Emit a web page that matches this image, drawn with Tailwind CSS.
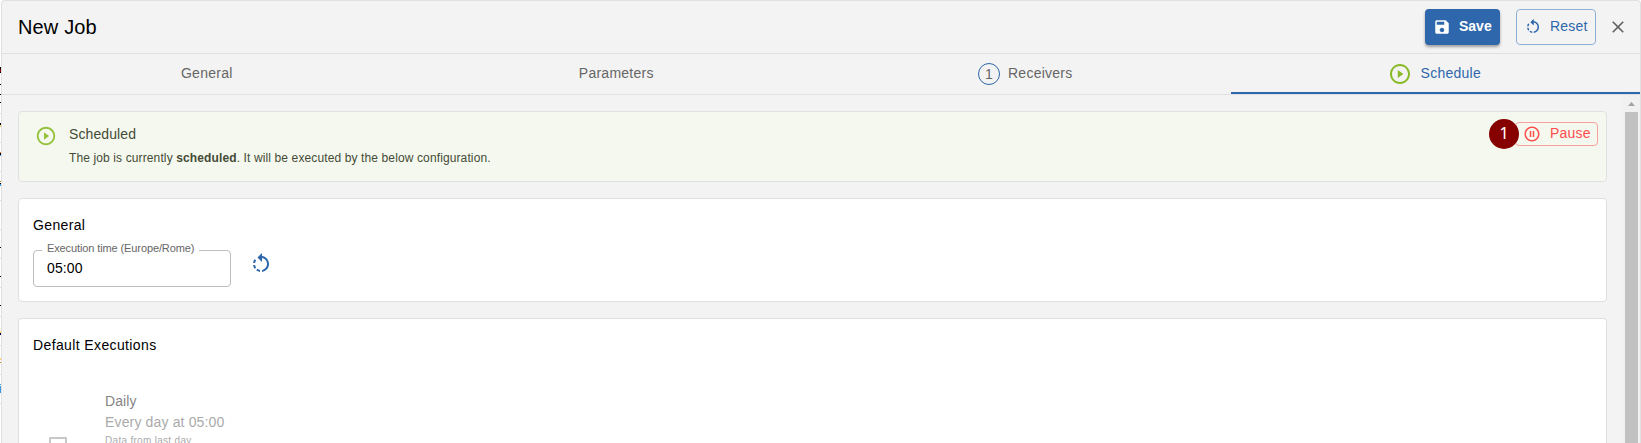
<!DOCTYPE html>
<html lang="en">
<head>
<meta charset="utf-8">
<title>New Job</title>
<script src="https://cdn.jsdelivr.net/npm/@tailwindcss/browser@4"></script>
</head>
<body class="h-[443px] w-[1641px] overflow-hidden bg-white font-['Liberation_Sans',Arial,sans-serif] text-black">
<svg width="0" height="0" class="absolute">
  <symbol id="rotate" viewBox="0 0 24 24"><path d="M7.11 8.53 5.7 7.11C4.8 8.27 4.24 9.61 4.07 11h2.02c.14-.87.49-1.72 1.02-2.47zM6.09 13H4.07c.17 1.39.72 2.73 1.62 3.89l1.41-1.42c-.52-.75-.87-1.59-1.01-2.47zm1.01 5.32c1.16.9 2.51 1.44 3.9 1.61V17.9c-.87-.15-1.71-.49-2.46-1.03L7.1 18.32zM13 4.07V1L8.45 5.55 13 10V6.09c2.84.48 5 2.94 5 5.91s-2.16 5.43-5 5.91v2.02c3.95-.49 7-3.85 7-7.93s-3.05-7.44-7-7.93z"/></symbol>
  <symbol id="play" viewBox="0 0 24 24"><path d="M12 2C6.48 2 2 6.48 2 12s4.48 10 10 10 10-4.48 10-10S17.52 2 12 2zm0 18c-4.41 0-8-3.59-8-8s3.59-8 8-8 8 3.59 8 8-3.59 8-8 8zM9.8 16l5.6-4-5.6-4z"/></symbol>
</svg>
<div class="flex h-full">
  <svg class="h-[443px] w-px shrink-0" viewBox="0 0 1 443" shape-rendering="crispEdges">
    <path fill="#e0e0e0" d="M0 113h1v1H0zM0 142h1v1H0zM0 171h1v1H0zM0 200h1v1H0zM0 229h1v1H0zM0 258h1v1H0zM0 287h1v1H0zM0 316h1v1H0zM0 345h1v1H0zM0 374h1v1H0zM0 403h1v1H0z"/>
    <path fill="#000" d="M0 67h1v6H0zM0 84h1v1H0zM0 94h1v1H0zM0 102h1v1H0zM0 123h1v2H0zM0 154h1v1H0zM0 183h1v1H0zM0 247h1v1H0zM0 276h1v1H0zM0 305h1v1H0z"/>
    <path fill="#700" d="M0 69h1v3H0z"/><path fill="#ffcf70" d="M0 125h1v2H0zM0 331h1v2H0zM0 358h1v2H0z"/>
    <path fill="#e08020" d="M0 152h1v1H0zM0 181h1v1H0zM0 362h1v1H0z"/><path fill="#004" d="M0 333h1v2H0zM0 153h1v1H0z"/>
    <path fill="#3a9be8" d="M0 155h1v1H0zM0 184h1v2H0zM0 384h1v1H0zM0 386h1v7H0z"/>
  </svg>
  <main class="flex h-full w-[1640px] flex-col overflow-hidden rounded-t border border-b-0 border-[#e0e0e0] bg-[#f3f3f3]">
    <header class="flex h-[53px] shrink-0 items-center border-b border-[#e0e0e0] pr-3 pl-4">
      <h1 class="mr-auto text-[20px] leading-6 tracking-[0.15px]">New Job</h1>
      <button class="flex h-9 w-[75px] items-center rounded bg-[#2e67ab] pl-2 text-[14px] font-bold text-white shadow-[0_2px_3px_rgba(0,0,0,0.35)]">
        <svg class="mr-2 size-[18px]" viewBox="0 0 24 24" fill="currentColor"><path d="M17 3H5c-1.11 0-2 .9-2 2v14c0 1.1.89 2 2 2h14c1.1 0 2-.9 2-2V7l-4-4zm-5 16c-1.66 0-3-1.34-3-3s1.34-3 3-3 3 1.34 3 3-1.34 3-3 3zm3-10H5V5h10v4z"/></svg><span class="-translate-y-px">Save</span></button>
      <button class="ml-4 flex h-9 w-20 items-center rounded border border-[#8faed3] pl-[7px] text-[14px] tracking-[0.2px] text-[#2e67ab]">
        <svg class="mr-2 size-[18px] fill-[#2e67ab]"><use href="#rotate"/></svg><span class="-translate-y-px">Reset</span></button>
      <svg class="ml-3 size-5 fill-[#666]" viewBox="0 0 24 24"><path d="M19 6.41 17.59 5 12 10.59 6.41 5 5 6.41 10.59 12 5 17.59 6.41 19 12 13.41 17.59 19 19 17.59 13.41 12z"/></svg>
    </header>
    <nav class="grid h-[41px] shrink-0 grid-cols-4 border-b border-[#e0e0e0] text-[14px] leading-[38px] tracking-[0.25px] text-[#666]">
      <div class="text-center">General</div>
      <div class="text-center">Parameters</div>
      <div class="flex justify-center gap-2 pr-px"><span class="mt-[9px] size-[22px] rounded-full border border-[#2e67ab] text-center leading-[21px]">1</span>Receivers</div>
      <div class="flex justify-center gap-[9px] border-b-2 border-[#2e67ab] pr-[2px] text-[#2e67ab]"><svg class="mt-2 size-6 fill-[#8ab929]"><use href="#play"/></svg>Schedule</div>
    </nav>
    <div class="flex min-h-0 flex-1">
      <div class="flex flex-1 flex-col gap-4 pt-4 pr-4 pl-4">
        <section class="flex h-[71px] shrink-0 rounded border border-[#e0e0e0] bg-[#f5f8ee] pl-4">
          <svg class="mt-[13px] size-[22px] fill-[#93c23c]"><use href="#play"/></svg>
          <div class="ml-[12px] pt-3 text-[#444b36]">
            <h2 class="text-[14px] leading-5 tracking-[0.1px]">Scheduled</h2>
            <p class="mt-[6px] text-[12px] leading-4 tracking-[0.12px]">The job is currently <b>scheduled</b>. It will be executed by the below configuration.</p>
          </div>
          <div class="mt-[10px] mr-2 ml-auto flex h-6">
            <span class="z-10 -mt-[3px] -mr-[4px] size-[30px] rounded-full bg-[#860000] text-center font-['Noto_Sans'] text-[17px] leading-[28px] text-white">1</span>
            <button class="flex w-[83px] items-center rounded border border-[#fa9f9f] pl-[7px] text-[14px] tracking-[0.2px] text-[#ff4d4d]">
              <svg class="mr-[9px] size-[18px]" viewBox="0 0 24 24" fill="currentColor"><path d="M9 16h2V8H9v8zm3-14C6.48 2 2 6.48 2 12s4.48 10 10 10 10-4.48 10-10S17.52 2 12 2zm0 18c-4.41 0-8-3.59-8-8s3.59-8 8-8 8 3.59 8 8-3.59 8-8 8zm1-4h2V8h-2v8z"/></svg><span class="-translate-y-px">Pause</span></button>
          </div>
        </section>
        <section class="h-[104px] shrink-0 rounded border border-[#e0e0e0] bg-white px-[14px] pt-4">
          <h2 class="text-[14px] leading-5 tracking-[0.35px]">General</h2>
          <div class="flex">
            <fieldset class="mt-2 h-11 w-[198px] rounded border border-[#bdbdbd] pl-2">
              <legend class="h-[14px] w-[157px] px-[5px] text-[11px] leading-[10px] tracking-[-0.11px] whitespace-nowrap text-[#666]">Execution time (Europe/Rome)</legend>
              <div class="pl-[5px] text-[14px] leading-[22px] tracking-[0.1px]">05:00</div>
            </fieldset>
            <svg class="mt-[17px] ml-[18px] size-6 fill-[#2e67ab]"><use href="#rotate"/></svg>
          </div>
        </section>
        <section class="min-h-0 flex-1 overflow-hidden rounded-t border border-b-0 border-[#e0e0e0] bg-white px-[14px] pt-4">
          <h2 class="text-[14px] leading-5 tracking-[0.38px]">Default Executions</h2>
          <div class="mt-9 flex">
            <span class="mt-[46px] ml-4 size-[18px] rounded-[1px] border-2 border-[#c8c8c8]"></span>
            <div class="ml-[38px]">
              <div class="text-[14px] leading-5 tracking-[0.1px] text-[#858585]">Daily</div>
              <div class="text-[14px] leading-[22px] tracking-[0.15px] text-[#aaa]">Every day at 05:00</div>
              <div class="text-[10px] leading-4 tracking-[0.3px] text-[#aaa]">Data from last day</div>
            </div>
          </div>
        </section>
      </div>
      <div class="flex w-[17px] flex-col items-center bg-[#f1f1f1]">
        <svg class="h-[17px] w-[17px] shrink-0" viewBox="0 0 17 17"><path fill="#a3a3a3" d="M5 11 8.5 7 12 11z"/></svg>
        <div class="w-[13px] flex-1 bg-[#c1c1c1]"></div>
      </div>
    </div>
  </main>
</div>
</body>
</html>
